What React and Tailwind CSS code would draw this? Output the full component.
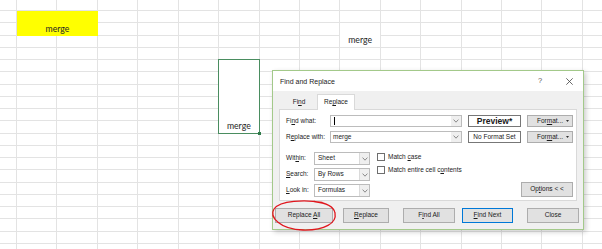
import React from "react";

const U = ({ children }) => <span className="underline underline-offset-[1px]">{children}</span>;

const Chevron = () => (
  <svg width="6" height="4" viewBox="0 0 6 4" className="block">
    <path d="M0.6 0.6 L3 3.2 L5.4 0.6" fill="none" stroke="#707070" strokeWidth="0.8" />
  </svg>
);

const Select = ({ value }) => (
  <div className="flex h-[13px] w-[56px] border border-[#bcbcbc] bg-white">
    <div className="flex flex-1 items-center pl-[3px]">{value}</div>
    <div className="flex w-[10px] items-center justify-center border-l border-[#dadada] bg-[#efefef]">
      <Chevron />
    </div>
  </div>
);

const Btn = ({ children, className = "", border = "border-[#adadad]" }) => (
  <div className={`flex h-[15px] items-center justify-center border bg-[#e1e1e1] ${border} ${className}`}>
    <span>{children}</span>
  </div>
);

const FormatBtn = () => (
  <div className="ml-[6px] flex h-[12px] w-[46px] items-center justify-between border border-[#adadad] bg-[#e1e1e1] pl-[9px] pr-[3px]">
    <span>
      For<U>m</U>at...
    </span>
    <svg width="3" height="2" viewBox="0 0 3 2" className="block">
      <path d="M0 0 H3 L1.5 2 Z" fill="#333" />
    </svg>
  </div>
);

const Check = ({ children, className = "" }) => (
  <div className={`flex items-center ${className}`}>
    <div className="h-[8px] w-[8px] border border-[#6e6e6e] bg-white" />
    <span className="ml-[3px]">{children}</span>
  </div>
);

const blanks = Array.from({ length: 16 * 21 - 12 });

export default function App() {
  return (
    <div className="relative h-[249px] w-[602px] overflow-hidden bg-white font-['Liberation_Sans',Arial,sans-serif]">
      {/* sheet */}
      <div className="grid grid-cols-[17px_repeat(15,40.43px)] grid-rows-[11px_repeat(20,12.26px)]">
        <div className="col-span-2 col-start-2 row-span-2 row-start-2 flex items-end justify-center bg-[#ffff00] pb-[2px] font-['Lato',sans-serif] text-[8.7px] leading-none text-[#262626]">
          merge
        </div>
        <div className="col-start-10 row-span-2 row-start-3 flex items-end justify-center border-r border-b border-[#e3e3e3] pb-[2px] font-['Lato',sans-serif] text-[8.7px] leading-none text-[#262626]">
          merge
        </div>
        <div className="relative col-start-7 row-span-6 row-start-6 -mt-px -ml-px flex items-end justify-center border border-[#4a8d60] pb-[2px] font-['Lato',sans-serif] text-[8.7px] leading-none text-[#262626]">
          merge
          <span className="absolute -right-[2px] -bottom-[2px] h-[3px] w-[3px] bg-[#2f7a4a]" />
        </div>
        {blanks.map((_, i) => (
          <div key={i} className="border-r border-b border-[#e3e3e3]" />
        ))}
      </div>

      {/* dialog */}
      <div className="absolute top-[70px] left-[272px] flex h-[160px] w-[312px] flex-col border border-[#a3c98a] bg-[#f0f0f0] text-[6.5px] leading-none text-[#1a1a1a] shadow-[2px_2px_5px_rgba(0,0,0,0.2)]">
        <div className="flex h-[20px] items-center bg-white pl-[7px] text-[7px]">
          <span>Find and Replace</span>
          <div className="ml-auto flex items-center pr-[4px]">
            <span className="w-[20px] text-center text-[7.5px] text-[#555]">?</span>
            <span className="ml-[9px] flex w-[20px] justify-center">
              <svg width="7" height="7" viewBox="0 0 7 7" className="block">
                <path d="M0.3 0.3 L6.7 6.7 M6.7 0.3 L0.3 6.7" stroke="#444" strokeWidth="0.8" />
              </svg>
            </span>
          </div>
        </div>

        <div className="flex h-[18px] items-end pl-[8px]">
          <div className="flex h-[13px] w-[36px] items-center justify-center">
            <span>
              Fi<U>n</U>d
            </span>
          </div>
          <div className="relative z-10 -mb-px flex h-[16px] w-[38px] items-center justify-center border border-b-0 border-[#d9d9d9] bg-white">
            <span>
              Re<U>p</U>lace
            </span>
          </div>
        </div>

        <div className="mx-[6px] flex h-[92px] flex-col border border-[#d9d9d9] bg-white pt-[5px] pr-[3px] pl-[6px]">
          <div className="flex h-[12px] items-center">
            <span className="w-[44px]">
              Fi<U>n</U>d what:
            </span>
            <div className="flex h-[12px] w-[132px] border border-[#bcbcbc] bg-white">
              <div className="flex flex-1 items-center pl-[3px]">
                <div className="h-[8px] w-px bg-black" />
              </div>
              <div className="flex w-[10px] items-center justify-center bg-[#efefef]">
                <Chevron />
              </div>
            </div>
            <div className="ml-[6px] flex h-[12px] w-[53px] items-center justify-center border border-[#777] bg-white text-[8.5px] font-bold">
              Preview*
            </div>
            <FormatBtn />
          </div>

          <div className="mt-[4px] flex h-[12px] items-center">
            <span className="w-[44px]">
              R<U>e</U>place with:
            </span>
            <div className="flex h-[12px] w-[132px] border border-[#bcbcbc] bg-white">
              <div className="flex flex-1 items-center pl-[2px]">merge</div>
              <div className="flex w-[10px] items-center justify-center bg-[#efefef]">
                <Chevron />
              </div>
            </div>
            <div className="ml-[6px] flex h-[12px] w-[53px] items-center justify-center border border-[#777] bg-white">
              No Format Set
            </div>
            <FormatBtn />
          </div>

          <div className="mt-[9px] flex">
            <div className="flex flex-col">
              <div className="flex h-[13px] items-center">
                <span className="w-[28px]">
                  Wit<U>h</U>in:
                </span>
                <Select value="Sheet" />
              </div>
              <div className="mt-[3px] flex h-[13px] items-center">
                <span className="w-[28px]">
                  <U>S</U>earch:
                </span>
                <Select value="By Rows" />
              </div>
              <div className="mt-[3px] flex h-[13px] items-center">
                <span className="w-[28px]">
                  <U>L</U>ook in:
                </span>
                <Select value="Formulas" />
              </div>
            </div>
            <div className="ml-[7px] flex flex-col">
              <Check className="mt-[1px]">
                Match <U>c</U>ase
              </Check>
              <Check className="mt-[5px]">
                Match entire cell c<U>o</U>ntents
              </Check>
            </div>
            <Btn className="ml-auto w-[52px] self-end">
              Op<U>t</U>ions &lt; &lt;
            </Btn>
          </div>
        </div>

        <div className="mt-[7px] flex pl-[2px]">
          <Btn className="w-[58px]">
            Replace <U>A</U>ll
          </Btn>
          <Btn className="ml-[10px] w-[46px]">
            <U>R</U>eplace
          </Btn>
          <Btn className="ml-[14px] w-[52px]">
            F<U>i</U>nd All
          </Btn>
          <Btn className="ml-[7px] w-[51px]" border="border-[#0078d7]">
            <U>F</U>ind Next
          </Btn>
          <Btn className="ml-[14px] w-[52px]">Close</Btn>
        </div>
      </div>

      {/* red annotation */}
      <svg className="pointer-events-none absolute top-0 left-0" width="602" height="249" viewBox="0 0 602 249">
        <path
          d="M322 202.5 C305 199.5 280 200.5 274 209 C269 217 280 229.5 303 230 C325 230.5 337 223 335 213 C334 207 327 203 314 201.5"
          fill="none"
          stroke="#e0161d"
          strokeWidth="1.3"
          strokeLinecap="round"
        />
      </svg>
    </div>
  );
}
